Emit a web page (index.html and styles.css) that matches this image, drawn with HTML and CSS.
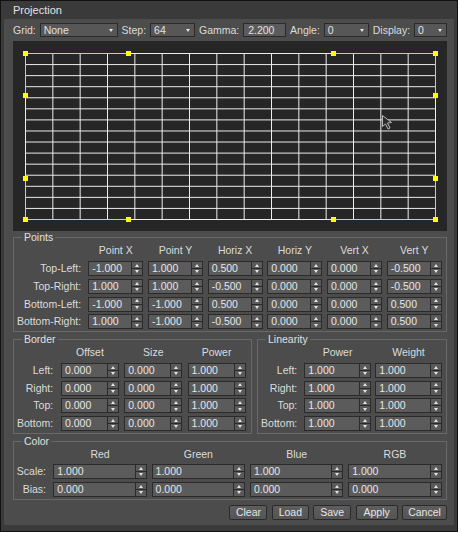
FILE: index.html
```html
<!DOCTYPE html>
<html lang="en">
<head>
    <meta charset="UTF-8">
    <title>Projection</title>
    <link rel="stylesheet" href="styles.css">
</head>
<body>
<div class="window">
    <div class="titlebar">Projection</div>
    <div class="panel">
        <div class="toolbar">
            <span>Grid:</span><div class="combo w-grid"><span>None</span></div>
            <span>Step:</span><div class="combo w-step"><span>64</span></div>
            <span>Gamma:</span><div class="field w-gamma">2.200</div>
            <span>Angle:</span><div class="combo w-angle"><span>0</span></div>
            <span>Display:</span><div class="combo w-display"><span>0</span></div>
        </div>

        <div class="view">
            <svg width="434" height="190" viewBox="0 0 434 190">
                <!-- grid -->
                <path stroke="#ececec" stroke-width="1" fill="none" d="
                    M12.5 12.5V178.5 M39.83 12.5V178.5 M67.17 12.5V178.5 M94.5 12.5V178.5
                    M121.83 12.5V178.5 M149.17 12.5V178.5 M176.5 12.5V178.5 M203.83 12.5V178.5
                    M231.17 12.5V178.5 M258.5 12.5V178.5 M285.83 12.5V178.5 M313.17 12.5V178.5
                    M340.5 12.5V178.5 M367.83 12.5V178.5 M395.17 12.5V178.5 M422.5 12.5V178.5
                    M12.5 12.5H422.5 M12.5 23.57H422.5 M12.5 34.63H422.5 M12.5 45.7H422.5
                    M12.5 56.77H422.5 M12.5 67.83H422.5 M12.5 78.9H422.5 M12.5 89.97H422.5
                    M12.5 101.03H422.5 M12.5 112.1H422.5 M12.5 123.17H422.5 M12.5 134.23H422.5
                    M12.5 145.3H422.5 M12.5 156.37H422.5 M12.5 167.43H422.5 M12.5 178.5H422.5"/>
                <!-- tangent handles -->
                <path stroke="#e2e200" stroke-width="1" fill="none" d="
                    M12.5 12.5H115.5 M320.5 12.5H422.5 M12.5 12.5V54.5 M422.5 12.5V54.5
                    M12.5 137.5V178.5 M422.5 137.5V178.5 M12.5 178.5H115.5 M320.5 178.5H422.5"/>
                <g fill="#ffff00">
                    <rect x="10" y="10" width="5" height="5"/>
                    <rect x="113" y="10" width="5" height="5"/>
                    <rect x="318" y="10" width="5" height="5"/>
                    <rect x="420" y="10" width="5" height="5"/>
                    <rect x="10" y="52" width="5" height="5"/>
                    <rect x="420" y="52" width="5" height="5"/>
                    <rect x="10" y="135" width="5" height="5"/>
                    <rect x="420" y="135" width="5" height="5"/>
                    <rect x="10" y="176" width="5" height="5"/>
                    <rect x="113" y="176" width="5" height="5"/>
                    <rect x="318" y="176" width="5" height="5"/>
                    <rect x="420" y="176" width="5" height="5"/>
                </g>
                <!-- mouse pointer -->
                <path fill="#2a2a2a" stroke="#b8b8b8" stroke-width="1" d="M369.5 74.5l0 11 3-2.5 2.5 5 2-1-2.5-5 4-0.5z"/>
            </svg>
        </div>

        <fieldset class="group points">
            <legend>Points</legend>
            <div class="rows">
                <span></span><span class="hd">Point X</span><span class="hd">Point Y</span><span class="hd">Horiz X</span><span class="hd">Horiz Y</span><span class="hd">Vert X</span><span class="hd">Vert Y</span>

                <span class="lbl">Top-Left:</span>
                <div class="spin"><span>-1.000</span><b></b></div>
                <div class="spin"><span>1.000</span><b></b></div>
                <div class="spin"><span>0.500</span><b></b></div>
                <div class="spin"><span>0.000</span><b></b></div>
                <div class="spin"><span>0.000</span><b></b></div>
                <div class="spin"><span>-0.500</span><b></b></div>

                <span class="lbl">Top-Right:</span>
                <div class="spin"><span>1.000</span><b></b></div>
                <div class="spin"><span>1.000</span><b></b></div>
                <div class="spin"><span>-0.500</span><b></b></div>
                <div class="spin"><span>0.000</span><b></b></div>
                <div class="spin"><span>0.000</span><b></b></div>
                <div class="spin"><span>-0.500</span><b></b></div>

                <span class="lbl">Bottom-Left:</span>
                <div class="spin"><span>-1.000</span><b></b></div>
                <div class="spin"><span>-1.000</span><b></b></div>
                <div class="spin"><span>0.500</span><b></b></div>
                <div class="spin"><span>0.000</span><b></b></div>
                <div class="spin"><span>0.000</span><b></b></div>
                <div class="spin"><span>0.500</span><b></b></div>

                <span class="lbl">Bottom-Right:</span>
                <div class="spin"><span>1.000</span><b></b></div>
                <div class="spin"><span>-1.000</span><b></b></div>
                <div class="spin"><span>-0.500</span><b></b></div>
                <div class="spin"><span>0.000</span><b></b></div>
                <div class="spin"><span>0.000</span><b></b></div>
                <div class="spin"><span>0.500</span><b></b></div>
            </div>
        </fieldset>

        <div class="pair">
            <fieldset class="group border-group">
                <legend>Border</legend>
                <div class="rows">
                    <span></span><span class="hd">Offset</span><span class="hd">Size</span><span class="hd">Power</span>

                    <span class="lbl">Left:</span>
                    <div class="spin"><span>0.000</span><b></b></div>
                    <div class="spin"><span>0.000</span><b></b></div>
                    <div class="spin"><span>1.000</span><b></b></div>

                    <span class="lbl">Right:</span>
                    <div class="spin"><span>0.000</span><b></b></div>
                    <div class="spin"><span>0.000</span><b></b></div>
                    <div class="spin"><span>1.000</span><b></b></div>

                    <span class="lbl">Top:</span>
                    <div class="spin"><span>0.000</span><b></b></div>
                    <div class="spin"><span>0.000</span><b></b></div>
                    <div class="spin"><span>1.000</span><b></b></div>

                    <span class="lbl">Bottom:</span>
                    <div class="spin"><span>0.000</span><b></b></div>
                    <div class="spin"><span>0.000</span><b></b></div>
                    <div class="spin"><span>1.000</span><b></b></div>
                </div>
            </fieldset>

            <fieldset class="group linearity">
                <legend>Linearity</legend>
                <div class="rows">
                    <span></span><span class="hd">Power</span><span class="hd">Weight</span>

                    <span class="lbl">Left:</span>
                    <div class="spin"><span>1.000</span><b></b></div>
                    <div class="spin"><span>1.000</span><b></b></div>

                    <span class="lbl">Right:</span>
                    <div class="spin"><span>1.000</span><b></b></div>
                    <div class="spin"><span>1.000</span><b></b></div>

                    <span class="lbl">Top:</span>
                    <div class="spin"><span>1.000</span><b></b></div>
                    <div class="spin"><span>1.000</span><b></b></div>

                    <span class="lbl">Bottom:</span>
                    <div class="spin"><span>1.000</span><b></b></div>
                    <div class="spin"><span>1.000</span><b></b></div>
                </div>
            </fieldset>
        </div>

        <fieldset class="group color">
            <legend>Color</legend>
            <div class="rows">
                <span></span><span class="hd">Red</span><span class="hd">Green</span><span class="hd">Blue</span><span class="hd">RGB</span>

                <span class="lbl">Scale:</span>
                <div class="spin"><span>1.000</span><b></b></div>
                <div class="spin"><span>1.000</span><b></b></div>
                <div class="spin"><span>1.000</span><b></b></div>
                <div class="spin"><span>1.000</span><b></b></div>

                <span class="lbl">Bias:</span>
                <div class="spin"><span>0.000</span><b></b></div>
                <div class="spin"><span>0.000</span><b></b></div>
                <div class="spin"><span>0.000</span><b></b></div>
                <div class="spin"><span>0.000</span><b></b></div>
            </div>
        </fieldset>

        <div class="buttons">
            <button class="b-clear">Clear</button>
            <button class="b-load">Load</button>
            <button class="b-save">Save</button>
            <button class="b-apply">Apply</button>
            <button class="b-cancel">Cancel</button>
        </div>
    </div>
</div>
</body>
</html>
```

FILE: styles.css
```css
body {
    margin: 0;
    background-color: #ffffff;
    font-family: "Liberation Sans", Arial, sans-serif;
    font-size: 10.5px;
    color: #dcdcdc;
}
.window {
    width: 458px;
    box-sizing: border-box;
    border: 1px solid #121212;
    background-color: #3a3a3a;
}
.titlebar {
    height: 18px;
    box-sizing: border-box;
    padding: 1px 0 0 12px;
    line-height: 17px;
    font-size: 11px;
    color: #e2e2e2;
}
.panel {
    margin: 0 3px 6px 3px;
    padding: 4px 7px 5px 9px;
    background-color: #4c4c4c;
}

/* toolbar */
.toolbar {
    display: flex;
    align-items: center;
    justify-content: space-between;
    height: 14px;
    line-height: 12px;
}
.combo, .field {
    height: 14px;
    box-sizing: border-box;
    border: 1px solid #2a2a2a;
    background-color: #575757;
    color: #e2e2e2;
}
.combo {
    display: flex;
    align-items: center;
}
.combo span {
    flex: 1;
    padding-left: 3px;
}
.combo::after {
    content: "";
    margin: 1px 4px 0 0;
    border-left: 2px solid transparent;
    border-right: 2px solid transparent;
    border-top: 3px solid #e6e6e6;
}
.field {
    padding-left: 4px;
    background-color: #5b5b5b;
}
.w-grid { width: 78px; }
.w-step { width: 45px; }
.w-gamma { width: 43px; }
.w-angle { width: 45px; }
.w-display { width: 33px; }

/* curve view */
.view {
    margin-top: 4px;
    height: 190px;
    background-color: #262626;
}
.view svg {
    display: block;
}

/* group boxes */
.group {
    margin: 1px 0 0 0;
    padding: 0 0 2px 0;
    min-width: 0;
    box-sizing: border-box;
    border: 1px solid #686868;
}
.group legend {
    margin-left: 8px;
    padding: 0 2px;
    line-height: 13px;
    color: #e0e0e0;
}
.rows {
    display: grid;
    grid-template-rows: 14px;
    grid-auto-rows: 15px;
    row-gap: 2.7px;
}
.points {
    margin-top: 0;
}
.points .rows {
    grid-template-columns: 69.6px repeat(6, 55px);
    grid-template-rows: 14.5px;
    column-gap: 4.7px;
}
.pair {
    display: flex;
    gap: 5px;
}
.border-group {
    width: 239px;
    padding-bottom: 1.5px;
}
.border-group .rows {
    grid-template-columns: 41.7px repeat(3, 58px);
    column-gap: 5.3px;
}
.linearity {
    flex: 1;
    padding-bottom: 1.5px;
}
.linearity .rows {
    grid-template-columns: 41.8px repeat(2, 66.5px);
    column-gap: 4.5px;
}
.color .rows {
    grid-template-columns: 34.5px repeat(4, 93.5px);
    column-gap: 4.8px;
}
.hd {
    text-align: center;
    line-height: 13px;
}
.lbl {
    text-align: right;
    padding-right: 2.5px;
    line-height: 14px;
    white-space: nowrap;
}

/* spin boxes */
.spin {
    display: flex;
    height: 15px;
    box-sizing: border-box;
    border: 1px solid #2a2a2a;
    background-color: #5b5b5b;
    color: #e6e6e6;
}
.spin span {
    flex: 1;
    padding-left: 3px;
    line-height: 13px;
}
.spin b {
    width: 10px;
    display: flex;
    flex-direction: column;
    justify-content: space-around;
    align-items: center;
    border-left: 1px solid #2a2a2a;
    background: linear-gradient(#5a5a5a 0 6px, #2a2a2a 6px 7px, #5a5a5a 7px);
}
.spin b::before {
    content: "";
    border-left: 2px solid transparent;
    border-right: 2px solid transparent;
    border-bottom: 3px solid #e4e4e4;
}
.spin b::after {
    content: "";
    border-left: 2px solid transparent;
    border-right: 2px solid transparent;
    border-top: 3px solid #e4e4e4;
}

/* dialog buttons */
.buttons {
    display: flex;
    justify-content: flex-end;
    gap: 4.4px;
    margin-top: 5px;
}
.buttons button {
    height: 15px;
    padding: 0;
    border: 1px solid #2a2a2a;
    border-radius: 2px;
    background: linear-gradient(#5e5e5e, #545454);
    color: #e6e6e6;
    font-family: inherit;
    font-size: 10.5px;
    line-height: 13px;
}
.b-clear { width: 38px; }
.b-load { width: 37px; }
.b-save { width: 38px; }
.b-apply { width: 42px; }
.b-cancel { width: 45px; }
```
